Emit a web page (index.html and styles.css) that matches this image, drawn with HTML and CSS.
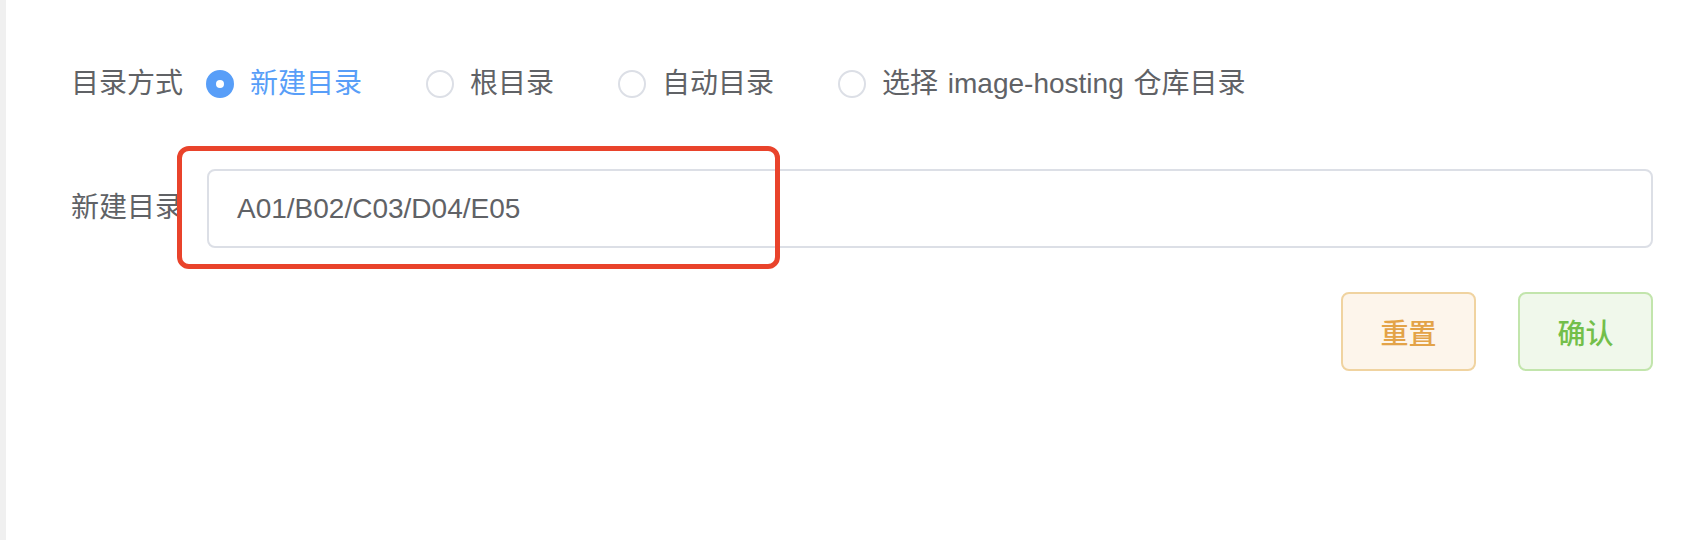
FILE: index.html
```html
<!DOCTYPE html>
<html lang="zh-CN">
<head>
<meta charset="utf-8">
<title>目录设置</title>
<link rel="stylesheet" href="styles.css">
</head>
<body>
<div class="page">
  <div class="side"></div>
  <div class="main">
    <form class="form">
      <div class="form-item">
        <label class="form-label">目录方式</label>
        <div class="form-content">
          <div class="radio-group">
            <label class="radio is-checked"><span class="radio-input"></span><span class="radio-label">新建目录</span></label>
            <label class="radio"><span class="radio-input"></span><span class="radio-label">根目录</span></label>
            <label class="radio"><span class="radio-input"></span><span class="radio-label">自动目录</span></label>
            <label class="radio"><span class="radio-input"></span><span class="radio-label wide">选择 image-hosting 仓库目录</span></label>
          </div>
        </div>
      </div>
      <div class="form-item">
        <label class="form-label">新建目录</label>
        <div class="form-content input-wrap">
          <div class="input">A01/B02/C03/D04/E05</div>
          <div class="highlight"></div>
        </div>
      </div>
      <div class="form-item actions">
        <button type="button" class="btn btn-warning">重置</button>
        <button type="button" class="btn btn-success">确认</button>
      </div>
    </form>
  </div>
</div>
</body>
</html>
```

FILE: styles.css
```css
html, body {
  margin: 0;
  padding: 0;
  background: #ffffff;
}
body {
  font-family: "Liberation Sans", "Noto Sans CJK SC", sans-serif;
  font-size: 28px;
  color: #606266;
}
.page {
  display: flex;
  height: 540px;
}
.side {
  width: 6px;
  background: #f0f0f0;
  flex: none;
}
.main {
  flex: 1;
  padding: 44px 55px 0 41px;
}
.form-item {
  display: flex;
  align-items: center;
  height: 80px;
  margin-bottom: 44px;
}
.form-label {
  width: 160px;
  box-sizing: border-box;
  padding-right: 24px;
  text-align: right;
  line-height: 80px;
  flex: none;
  color: #606266;
}
.form-content {
  flex: 1;
  display: flex;
  align-items: center;
  height: 80px;
}
.radio-group {
  display: flex;
  align-items: center;
}
.radio {
  display: inline-flex;
  align-items: center;
  margin-right: 65px;
  color: #606266;
  white-space: nowrap;
}
.radio-input {
  width: 28px;
  height: 28px;
  box-sizing: border-box;
  border: 2px solid #dcdfe6;
  border-radius: 50%;
  background: #fff;
  display: inline-flex;
  align-items: center;
  justify-content: center;
  margin-left: -1px;
}
.radio-label {
  padding-left: 16px;
  line-height: 40px;
}
.radio-label.wide {
  word-spacing: 2px;
}
.radio.is-checked .radio-input {
  border-color: #589ef8;
  background: #589ef8;
}
.radio.is-checked .radio-input::after {
  content: "";
  width: 8px;
  height: 8px;
  border-radius: 50%;
  background: #fff;
}
.radio.is-checked .radio-label {
  color: #589ef8;
}
.input-wrap {
  position: relative;
}
.input {
  flex: 1;
  height: 79px;
  box-sizing: border-box;
  border: 2px solid #dcdfe6;
  border-radius: 8px;
  padding: 0 28px;
  line-height: 75px;
  color: #606266;
  background: #fff;
}
.highlight {
  position: absolute;
  left: -30px;
  top: -22px;
  width: 603px;
  height: 123px;
  box-sizing: border-box;
  border: 5px solid #e9432b;
  border-radius: 12px;
  pointer-events: none;
}
.actions {
  justify-content: flex-end;
  height: 79px;
}
.btn {
  width: 135px;
  height: 79px;
  box-sizing: border-box;
  border-radius: 8px;
  border: 2px solid;
  font-family: "Liberation Sans", "Noto Sans CJK SC", sans-serif;
  font-size: 28px;
  font-weight: 500;
  padding: 0;
  margin-left: 42px;
  cursor: pointer;
}
.btn-warning {
  background: #fdf5eb;
  border-color: #f0d3a0;
  color: #e3a348;
}
.btn-success {
  background: #f0f8eb;
  border-color: #c2e5ac;
  color: #73bf4a;
}
```
